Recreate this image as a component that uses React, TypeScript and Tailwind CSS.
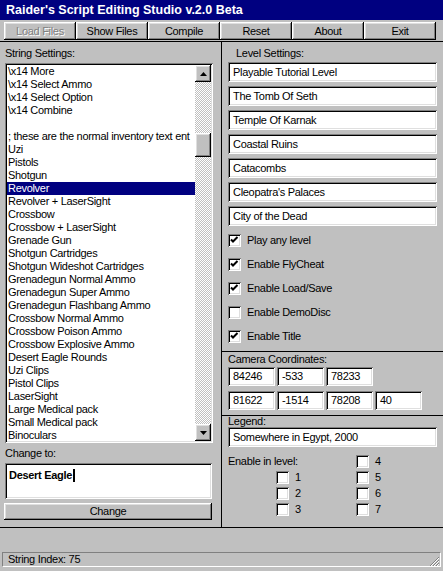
const raised =
  "bg-[#c0c0c0] shadow-[inset_-1px_-1px_#000,inset_1px_1px_#fff,inset_-2px_-2px_#808080,inset_2px_2px_#dfdfdf]"
const sunken =
  "bg-white shadow-[inset_1px_1px_#808080,inset_-1px_-1px_#fff,inset_2px_2px_#000,inset_-2px_-2px_#dfdfdf]"

const strings = [
  "\\x14 More",
  "\\x14 Select Ammo",
  "\\x14 Select Option",
  "\\x14 Combine",
  "",
  "; these are the normal inventory text ent",
  "Uzi",
  "Pistols",
  "Shotgun",
  "Revolver",
  "Revolver + LaserSight",
  "Crossbow",
  "Crossbow + LaserSight",
  "Grenade Gun",
  "Shotgun Cartridges",
  "Shotgun Wideshot Cartridges",
  "Grenadegun Normal Ammo",
  "Grenadegun Super Ammo",
  "Grenadegun Flashbang Ammo",
  "Crossbow Normal Ammo",
  "Crossbow Poison Ammo",
  "Crossbow Explosive Ammo",
  "Desert Eagle Rounds",
  "Uzi Clips",
  "Pistol Clips",
  "LaserSight",
  "Large Medical pack",
  "Small Medical pack",
  "Binoculars",
]

const levels = [
  "Playable Tutorial Level",
  "The Tomb Of Seth",
  "Temple Of Karnak",
  "Coastal Ruins",
  "Catacombs",
  "Cleopatra's Palaces",
  "City of the Dead",
]

const options = [
  { label: "Play any level", on: true },
  { label: "Enable FlyCheat", on: true },
  { label: "Enable Load/Save", on: true },
  { label: "Enable DemoDisc", on: false },
  { label: "Enable Title", on: true },
]

function CheckBox({ on = false }: { on?: boolean }) {
  return (
    <div className={`h-[13px] w-[13px] shrink-0 ${sunken}`}>
      {on && (
        <svg width="13" height="13" viewBox="0 0 13 13">
          <path d="M3 5.5 L5 7.5 L9.5 3" fill="none" stroke="#000" strokeWidth="2" />
        </svg>
      )}
    </div>
  )
}

function Field({ value, className = "" }: { value: string; className?: string }) {
  return (
    <div className={`flex items-center overflow-hidden whitespace-nowrap pl-[5px] ${sunken} ${className}`}>
      {value}
    </div>
  )
}

function ToolButton({ label, disabled }: { label: string; disabled?: boolean }) {
  return (
    <div
      className={`flex h-[18px] w-[72px] items-center justify-center ${raised} ${
        disabled ? "text-[#808080] [text-shadow:1px_1px_#fff]" : "text-black"
      }`}
    >
      {label}
    </div>
  )
}

function Arrow({ up }: { up?: boolean }) {
  return (
    <div className={`flex h-[17px] w-[16px] items-center justify-center ${raised}`}>
      <svg width="7" height="4" viewBox="0 0 7 4">
        <path d={up ? "M3.5 0 L7 4 L0 4 Z" : "M0 0 L7 0 L3.5 4 Z"} fill="#000" />
      </svg>
    </div>
  )
}

export default function App() {
  return (
    <div className="flex h-[571px] w-[443px] flex-col overflow-hidden bg-[#c0c0c0] font-['Liberation_Sans',Arial,sans-serif] text-[11px] tracking-[-0.3px] text-black">
      {/* title bar */}
      <div className="flex h-[20px] items-center bg-[#000080] pl-[6px] text-[12.5px] font-bold tracking-normal text-white">
        Raider's Script Editing Studio v.2.0 Beta
      </div>

      {/* toolbar */}
      <div className="flex h-[22px] border-b border-black pl-[4px] pt-[2px]">
        <ToolButton label="Load Files" disabled />
        <ToolButton label="Show Files" />
        <ToolButton label="Compile" />
        <ToolButton label="Reset" />
        <ToolButton label="About" />
        <ToolButton label="Exit" />
      </div>

      <div className="flex h-[486px] border-b border-black">
        {/* string settings */}
        <div className="flex w-[222px] flex-col border-r border-black pl-[5px] pt-[5px]">
          <div className="h-[13px] leading-[13px]">String Settings:</div>
          <div className={`mt-[3px] flex h-[380px] w-[208px] p-[2px] ${sunken}`}>
            <div className="flex-1 overflow-hidden">
              {strings.map((s, i) => (
                <div
                  key={i}
                  className={`h-[13px] whitespace-nowrap pl-[1px] leading-[13px] ${
                    s === "Revolver" ? "bg-[#000080] text-white" : ""
                  }`}
                >
                  {s}
                </div>
              ))}
            </div>
            <div className="flex w-[16px] flex-col bg-[image:repeating-conic-gradient(#c0c0c0_0%_25%,#ffffff_0%_50%)] bg-[length:2px_2px]">
              <Arrow up />
              <div className="h-[51px]" />
              <div className={`h-[24px] ${raised}`} />
              <div className="flex-1" />
              <Arrow />
            </div>
          </div>

          <div className="mt-[4px] h-[13px] leading-[13px]">Change to:</div>
          <div className={`mt-[3px] h-[36px] w-[207px] pl-[4px] pt-[4px] font-bold ${sunken}`}>
            <span className="inline-flex items-center leading-[13px]">
              Desert Eagle
              <span className="ml-[1px] inline-block h-[13px] w-[2px] bg-black" />
            </span>
          </div>
          <div className={`mt-[4px] ml-[-1px] flex h-[17px] w-[208px] items-center justify-center ${raised}`}>
            Change
          </div>
        </div>

        {/* right column */}
        <div className="flex flex-1 flex-col">
          <div className="flex h-[310px] flex-col border-b border-black pl-[6px] pt-[5px]">
            <div className="h-[13px] pl-[8px] leading-[13px]">Level Settings:</div>
            <div className="mt-[2px] flex flex-col gap-[4px]">
              {levels.map((l) => (
                <Field key={l} value={l} className="h-[20px] w-[209px]" />
              ))}
            </div>
            <div className="mt-[2px] flex flex-col">
              {options.map((o) => (
                <div key={o.label} className="flex h-[24px] items-center gap-[6px]">
                  <CheckBox on={o.on} />
                  <span>{o.label}</span>
                </div>
              ))}
            </div>
          </div>

          <div className="flex h-[64px] flex-col border-b border-black pl-[6px] pt-[1px]">
            <div className="h-[13px] leading-[13px]">Camera Coordinates:</div>
            <div className="mt-[1px] flex gap-[2px]">
              <Field value="84246" className="h-[19px] w-[47px] pl-[3px]" />
              <Field value="-533" className="h-[19px] w-[47px] pl-[3px]" />
              <Field value="78233" className="h-[19px] w-[47px] pl-[3px]" />
            </div>
            <div className="mt-[5px] flex gap-[2px]">
              <Field value="81622" className="h-[19px] w-[47px] pl-[3px]" />
              <Field value="-1514" className="h-[19px] w-[47px] pl-[3px]" />
              <Field value="78208" className="h-[19px] w-[47px] pl-[3px]" />
              <Field value="40" className="h-[19px] w-[47px] pl-[3px]" />
            </div>
          </div>

          <div className="flex flex-1 flex-col pl-[6px]">
            <div className="h-[11px] leading-[11px]">Legend:</div>
            <Field value="Somewhere in Egypt, 2000" className="h-[20px] w-[209px]" />
            <div className="mt-[6px] grid grid-cols-[48px_80px_1fr] grid-rows-[16px_16px_16px_16px] items-center">
              <div className="col-span-2">Enable in level:</div>
              <div className="flex items-center gap-[6px]">
                <CheckBox />
                <span>4</span>
              </div>
              {[
                ["1", "5"],
                ["2", "6"],
                ["3", "7"],
              ].map(([a, b]) => (
                <div key={a} className="col-span-3 grid grid-cols-[48px_80px_1fr] items-center">
                  <div />
                  <div className="flex items-center gap-[6px]">
                    <CheckBox />
                    <span>{a}</span>
                  </div>
                  <div className="flex items-center gap-[6px]">
                    <CheckBox />
                    <span>{b}</span>
                  </div>
                </div>
              ))}
            </div>
          </div>
        </div>
      </div>

      {/* status bar */}
      <div className="flex-1 px-[2px] pt-[24px]">
        <div className="flex h-[15px] items-center justify-between border-b border-l border-t border-r border-b-white border-l-[#808080] border-r-white border-t-[#808080] pl-[5px]">
          <span>String Index: 75</span>
          <svg width="11" height="11" viewBox="0 0 11 11" className="mb-[-1px] self-end">
            <path d="M10 1 L1 10 M10 4 L4 10 M10 7 L7 10" stroke="#808080" strokeWidth="1" />
            <path d="M10 2 L2 10 M10 5 L5 10 M10 8 L8 10" stroke="#fff" strokeWidth="1" />
          </svg>
        </div>
      </div>
    </div>
  )
}
